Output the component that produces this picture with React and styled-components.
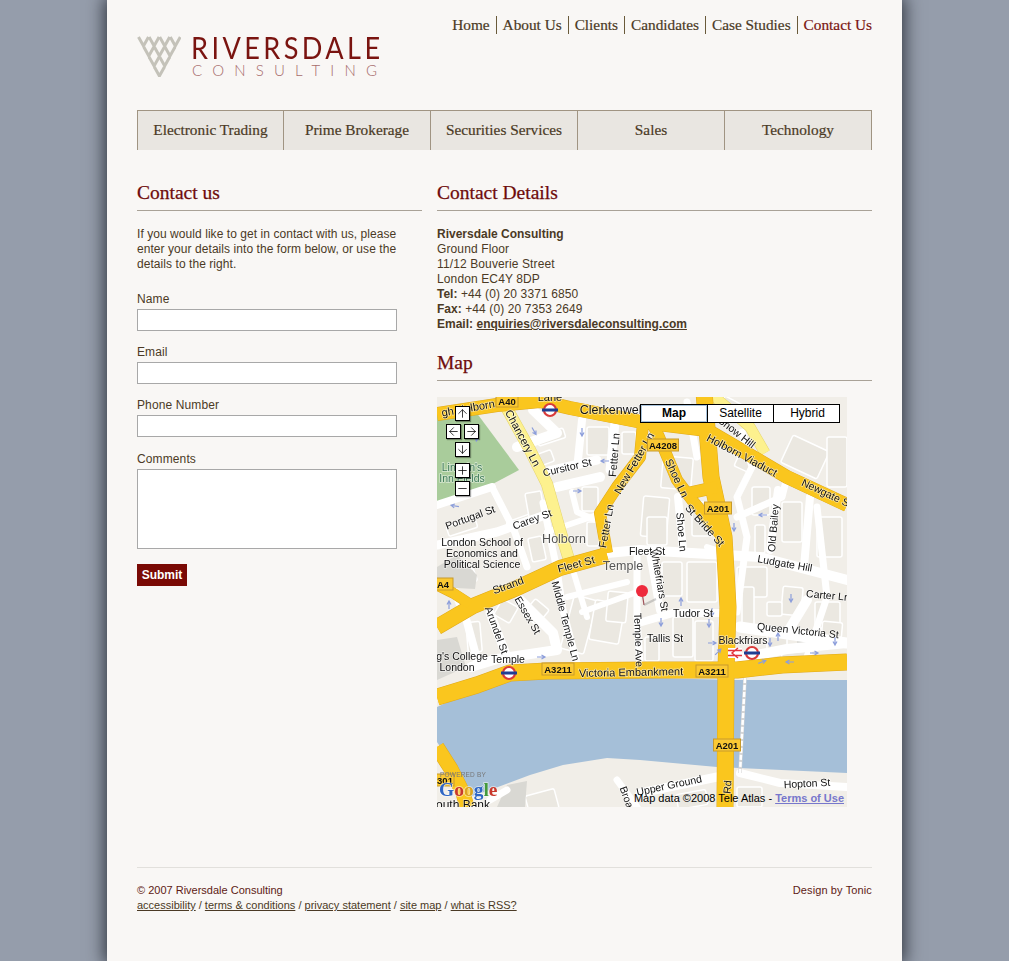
import React from "react";
import styled, { createGlobalStyle } from "styled-components";
import { ArrowUp, ArrowDown, ArrowLeft, ArrowRight, Plus, Minus } from "lucide-react";

const Global = createGlobalStyle`
  html, body { margin: 0; padding: 0; background: #959dab; overflow: hidden; }
  body { font-family: "Liberation Sans", Arial, sans-serif; font-size: 12px; line-height: 15px; letter-spacing: 0.12px; color: #4b3a25; }
  strong { letter-spacing: 0; }
`;
const Panel = styled.div`
  width: 735px; min-height: 961px; margin: 0 auto; padding: 0 30px; background: #f9f7f5;
  box-shadow: 0 0 16px 3px rgba(20, 24, 32, 0.75);
`;
const Header = styled.header`display: flex; justify-content: space-between; height: 110px;`;
const Logo = styled.div`display: flex; gap: 10px; padding-top: 36px; height: 41px;`;
const LogoWords = styled.div`display: flex; flex-direction: column; letter-spacing: 0;`;
const LogoMain = styled.div`
  font-family: Lato, sans-serif; font-weight: 400; font-size: 31px; line-height: 23px; letter-spacing: 3.9px; color: #7a1410; white-space: nowrap;
  transform: scaleX(0.875); transform-origin: left center;
`;
const LogoSub = styled.div`
  font-family: Lato, sans-serif; font-weight: 300; font-size: 15px; line-height: 11px; margin-top: 6px; letter-spacing: 10.2px; color: #a76c6c; white-space: nowrap; margin-left: 1px;
`;
const TopNav = styled.nav`display: flex; align-items: center; height: 18px; margin-top: 16px; letter-spacing: 0;`;
const TopLink = styled.a`
  font-family: "Liberation Serif", serif; font-size: 15.3px; line-height: 18px; padding: 0 6px; color: ${p => p.$active ? "#7a1410" : "#4b3a25"};
  border-right: 1px solid #6a5a3a; white-space: nowrap; -webkit-text-stroke: 0.2px currentColor;
  &:last-child { border-right: 0; padding-right: 0; }
`;
const Tabs = styled.nav`
  display: grid; grid-template-columns: 146px 147px 147px 147px 148px; height: 39px; border-top: 1px solid #a09482; background: #e9e6e1; letter-spacing: 0;
`;
const Tab = styled.a`
  display: flex; align-items: center; justify-content: center; padding-bottom: 2px; font-family: "Liberation Serif", serif; font-size: 15.3px; color: #4b3a25;
  border-left: 1px solid #a09482; white-space: nowrap; -webkit-text-stroke: 0.2px currentColor;
  &:last-child { border-right: 1px solid #a09482; }
`;
const Main = styled.main`display: grid; grid-template-columns: 285px 435px; column-gap: 15px; padding-top: 30px;`;
const Heading = styled.h2`
  margin: 0; height: 30px; font-family: "Liberation Serif", serif; font-weight: 400; font-size: 19.5px; line-height: 26px; letter-spacing: 0; color: #6e0b0b;
  border-bottom: 1px solid #a9a297; -webkit-text-stroke: 0.25px currentColor;
`;
const Intro = styled.p`margin: 16px 0 19px; width: 265px; letter-spacing: 0.06px;`;
const Field = styled.div`display: flex; flex-direction: column; margin-bottom: ${p => p.$mb || 13}px;`;
const Label = styled.label`height: 15px; line-height: 17px; margin-bottom: 3px;`;
const TextInput = styled.input`
  box-sizing: border-box; width: 260px; height: 22px; padding: 2px; margin: 0; border: 1px solid #a8a8a8; background: #fff;
`;
const TextArea = styled.textarea`
  box-sizing: border-box; width: 260px; height: 80px; padding: 2px; margin: 0; border: 1px solid #a8a8a8; background: #fff; resize: none; display: block;
`;
const Submit = styled.button`
  display: block; width: 50px; height: 22px; padding: 0; border: 0; background: #7a0a05; color: #fff; font: bold 12px "Liberation Sans", sans-serif;
`;
const Details = styled.address`font-style: normal; margin: 16px 0 18px;`;
const Line = styled.div``;
const Mail = styled.a`font-weight: bold; letter-spacing: 0; text-decoration: underline; color: #4b3a25;`;
const MapFrame = styled.div`position: relative; width: 410px; height: 410px; margin-top: 16px; overflow: hidden; background: #f1eee8; letter-spacing: 0;`;
const MapSvg = styled.svg`
  display: block; filter: blur(0.35px);
  text { font-family: "Liberation Sans", sans-serif; fill: #111; paint-order: stroke; stroke: rgba(255,255,255,.55); stroke-width: 1.5px; }
`;
const NavBtn = styled.div`
  position: absolute; left: ${p => p.$x}px; top: ${p => p.$y}px; box-sizing: border-box; width: 15px; height: 15px; background: #fff; border: 1px solid #000;
  box-shadow: 1px 1px 1px rgba(0,0,0,.35); display: flex; align-items: center; justify-content: center; color: #000;
`;
const TypeBar = styled.div`
  position: absolute; left: 203px; top: 7px; width: 200px; height: 19px; box-sizing: border-box; display: grid; grid-template-columns: 67px 66px 67px; background: #fff; border: 1px solid #000;
`;
const TypeBtn = styled.div`
  display: flex; align-items: center; justify-content: center; font-size: 12px; color: #000; font-weight: ${p => p.$on ? "bold" : "normal"};
  border-right: 1px solid #000; box-shadow: ${p => p.$on ? "inset 0 0 0 1px #a9c4dc" : "none"};
  &:last-child { border-right: 0; }
`;
const MapCredit = styled.div`
  position: absolute; right: 3px; bottom: 2px; font-size: 11px; line-height: 13px; color: #000; white-space: nowrap;
`;
const Terms = styled.span`font-weight: bold; color: #7777cc; text-decoration: underline;`;
const Footer = styled.footer`
  display: flex; justify-content: space-between; margin-top: 60px; padding-top: 15px; border-top: 1px solid #e2e0dc; font-size: 11px; letter-spacing: 0; color: #5e1a14;
`;
const Credit = styled.div`letter-spacing: 0.12px;`;
const FootLinks = styled.div`color: #4b3a25;`;
const FootLink = styled.a`text-decoration: underline; color: #4b3a25;`;

const Chevrons = () => {
  const rows = [[0,4],[1,3],[2,2],[3,1]];
  const vs = [];
  rows.forEach(([r, n]) => {
    for (let i = 0; i < n; i++) {
      const x = 1.5 + r * 5.3 + i * 10.6;
      const y = 1 + r * 10;
      vs.push(<path key={r + "-" + i} d={`M${x} ${y}L${x + 5} ${y + 9}L${x + 10} ${y}`} fill="none" stroke="#c4c2b9" strokeWidth="3" />);
    }
  });
  return <svg width="44" height="41" viewBox="0 0 44 41">{vs}</svg>;
};

const poly = pts => pts.map(p => p.join(",")).join(" ");

const yellow = [
  [[[0,300],[40,288],[73,276],[110,274],[213,273],[300,273],[345,268],[410,265]], 16],
  [[[0,230],[36,209],[80,191],[123,171],[170,158]], 15],
  [[[0,188],[16,196],[33,207]], 10],
  [[[0,17],[60,8],[103,4],[133,11],[205,25],[270,33],[350,80],[410,108]], 13],
  [[[267,-5],[274,80],[287,140],[291,210],[289,272],[288,410]], 16],
  [[[213,22],[222,40],[240,83],[255,103],[283,137]], 11],
  [[[248,97],[280,90]], 12],
  [[[206,26],[203,60],[180,90],[163,116],[170,156]], 11],
  [[[0,350],[14,372],[26,396],[30,410]], 14],
];
const paleYellow = [
  [[[68,8],[93,53],[110,87],[123,133],[133,166]], 11],
  [[[273,-4],[313,30],[328,56]], 10],
];
const white = [
  [[[0,108],[55,90]],8],[[[0,148],[60,135],[117,115]],9],[[[55,90],[77,133],[90,170]],7],
  [[[103,76],[160,63]],9],[[[120,90],[163,80]],10],[[[178,26],[173,73]],9],[[[145,23],[141,63]],8],
  [[[96,13],[120,36],[80,50]],10],[[[106,106],[120,173],[126,213],[140,266]],7],
  [[[213,156],[223,213]],8],[[[241,100],[246,153]],8],[[[341,93],[333,153]],8],[[[373,100],[367,170]],8],
  [[[170,156],[203,153],[323,160],[410,183]],10],[[[200,160],[200,220],[203,266]],7],
  [[[205,225],[236,216],[283,216]],8],[[[303,230],[410,246]],11],[[[300,262],[350,252],[410,246]],10],
  [[[350,236],[370,203]],10],[[[53,216],[70,260]],9],[[[83,203],[116,236],[120,253],[60,262],[34,270]],10],
  [[[303,376],[343,386],[410,390]],8],[[[203,396],[280,380]],9],[[[180,383],[200,410]],7],[[[53,403],[70,393]],7],
  [[[20,200],[30,225],[40,262]],8],[[[135,170],[150,220]],6],[[[270,150],[285,155]],6],[[[305,35],[315,70],[300,100],[310,140],[300,215]],7],
  [[[350,80],[345,100],[300,120]],7],[[[380,110],[390,200],[370,260]],7],[[[160,118],[110,135]],6],[[[260,60],[250,5]],7],
  [[[130,200],[190,185]],6],[[[145,215],[200,195]],6],[[[300,330],[296,345]],3],[[[170,128],[140,115],[135,95]],6],
];
const blocks = [
  [150,30,22,28,0],[185,35,14,22,0],[100,55,16,12,-20],[70,120,30,10,-20],[90,95,16,26,-10],[10,125,30,10,-18],[15,175,24,13,-20],
  [93,140,14,24,-12],[145,90,16,24,0],[150,125,12,24,0],[225,60,30,32,5],[205,100,26,40,5],[210,120,20,28,0],[255,105,18,34,0],
  [300,55,16,18,25],[315,90,18,28,0],[318,128,10,28,0],[345,105,20,40,0],[380,120,25,40,0],[348,45,40,30,25],[390,40,20,50,0],
  [283,5,30,14,28],[250,165,30,40,0],[225,165,20,34,0],[300,170,30,30,0],[345,190,20,28,5],[378,205,25,26,0],[330,205,15,14,0],
  [236,220,20,40,0],[258,224,18,40,0],[208,240,14,24,0],[90,205,18,20,40],[60,205,18,18,30],[130,200,24,55,15],[155,205,30,40,10],
  [30,225,14,30,-5],[305,190,12,40,0],[345,255,30,12,-5],[0,185,18,4,0],[330,235,20,18,0],[385,225,20,15,5],[300,390,25,20,0],[240,395,30,15,-10],
  [90,395,30,20,-15],[100,35,28,10,-18],[170,195,20,30,5],
];
const grey = [[[0,243],[20,240],[29,270],[0,283]],[[360,240],[383,242],[383,254],[360,252]],[[70,388],[90,384],[88,410],[60,410]],[[20,158],[40,178],[38,192],[0,190],[0,170]]];
const labels = [
  ["gh Holborn",31,11,-10,11],["Lane",113,0,0,11],["Chancery Ln",86,41,62,11],["Cursitor St",130,70,-13,10.5],["Fetter Ln",177,58,-85,11],
  ["New Fetter Ln",197,66,-60,11],["Fetter Ln",169,129,-80,11],["Portugal St",33,120,-20,10.5],["Carey St",95,122,-20,10.5],
  ["London School of",45,145,0,10.5],["Economics and",45,156,0,10.5],["Political Science",45,167,0,10.5],["Fleet St",139,167,-15,11],
  ["Strand",71,188,-20,11],["Essex St",91,218,60,10.5],["Middle Temple Ln",129,224,75,10.5],["Arundel St",60,233,70,10.5],
  ["Snow Hill",300,35,38,10.5],["Holborn Viaduct",305,58,28,11],["Newgate St",390,96,25,10.5],["Shoe Ln",240,81,65,11],["Shoe Ln",245,135,85,10.5],
  ["St Bride St",268,128,48,11],["Old Bailey",336,131,-85,10.5],["Fleet St",210,154,0,10.5],["Whitefriars St",223,183,80,10.5],["Ludgate Hill",348,166,10,10.5],
  ["Carter Ln",391,198,5,10.5],["Tudor St",256,216,0,10.5],["Tallis St",228,241,0,10.5],["Temple Ave",202,243,88,10.5],["Queen Victoria St",361,233,6,10.5],
  ["Blackfriars",306,243,0,10.5],["Temple",71,262,0,10.5],["g's College",25,259,0,10.5],["London",20,270,0,10.5],["Victoria Embankment",194,275,-1,11],
  ["Upper Ground",232,388,-12,10.5],["Hopton St",370,386,-3,10.5],["Broa",190,400,70,10.5],["Rd",290,390,-85,10.5],["Clerkenwell",175,13,0,12.5],["outh Bank",26,408,0,12],
];
const shields = [["A40",70,4,22],["A4208",226,48,31],["A201",281,111,27],["A4",6,187,20],["A3211",121,272,32],["A3211",275,274,32],["A201",290,348,27],["301",8,383,18]];
const arrows = [[97,34,60],[145,35,90],[168,64,180],[140,94,0],[40,40,100],[18,109,190],[12,208,-90],[326,118,180],[297,130,90],[354,201,90],[275,246,0],[272,226,90],[341,240,-90],[333,245,90],[398,244,90],[377,256,0],[353,265,180],[281,255,-45],[325,265,-20],[104,260,0],[275,215,90],[244,205,-90],[224,225,90]];

const Roundel = ({ x, y }) => (
  <g>
    <circle cx={x} cy={y} r="6" fill="#fff" stroke="#d93a3a" strokeWidth="2.2" />
    <rect x={x - 8} y={y - 1.5} width="16" height="3" fill="#1f3f93" />
  </g>
);

const Streets = () => (
  <MapSvg width="410" height="410" viewBox="0 0 410 410">
    <rect width="410" height="410" fill="#f1eee8" />
    <polygon points={poly([[0,17],[36,11],[82,73],[50,90],[0,107]])} fill="#a9cc9b" />
    {blocks.map(([x,y,w,h,r],i) => (
      <rect key={i} x={x} y={y} width={w} height={h} rx="2" transform={`rotate(${r} ${x+w/2} ${y+h/2})`} fill="#ebe8e1" stroke="#fff" strokeWidth="1.5" />
    ))}
    {grey.map((g,i) => <polygon key={i} points={poly(g)} fill="#d9d8d3" />)}
    {white.map(([pts,w],i) => <polyline key={i} points={poly(pts)} fill="none" stroke="#fff" strokeWidth={w} strokeLinecap="round" strokeLinejoin="round" />)}
    <polygon points={poly([[0,310],[26,298],[73,283],[106,281],[213,281],[300,283],[410,283],[410,376],[280,370],[203,363],[170,361],[126,368],[93,378],[53,393],[32,400],[10,360],[0,345]])} fill="#a5bfd8" />
    <polyline points="308,281 303,376" stroke="#d5d5d5" strokeWidth="3.5" fill="none" />
    <polyline points="308,281 303,376" stroke="#fff" strokeWidth="2.5" strokeDasharray="5 2" fill="none" />
    {paleYellow.map(([pts,w],i) => (
      <g key={i}>
        <polyline points={poly(pts)} fill="none" stroke="#e5d56f" strokeWidth={w+1} strokeLinejoin="round" />
        <polyline points={poly(pts)} fill="none" stroke="#fdf18e" strokeWidth={w} strokeLinejoin="round" />
      </g>
    ))}
    {yellow.map(([pts,w],i) => <polyline key={"o"+i} points={poly(pts)} fill="none" stroke="#dfa91c" strokeWidth={w+1} strokeLinejoin="round" />)}
    {yellow.map(([pts,w],i) => <polyline key={"y"+i} points={poly(pts)} fill="none" stroke="#fac61e" strokeWidth={w} strokeLinejoin="round" />)}
    {arrows.map(([x,y,r],i) => (
      <path key={i} d="M-4 0H3M0.5 -2L4 0L0.5 2" transform={`translate(${x} ${y}) rotate(${r})`} fill="none" stroke="#8c9edb" strokeWidth="1.2" />
    ))}
    {labels.map(([t,x,y,r,s],i) => (
      <text key={i} x={x} y={y} fontSize={s} textAnchor="middle" dominantBaseline="central" transform={`rotate(${r} ${x} ${y})`}>{t}</text>
    ))}
    <text x="127" y="142" fontSize="12.5" textAnchor="middle" dominantBaseline="central" style={{ fill: "#555" }}>Holborn</text>
    <text x="186" y="169" fontSize="12.5" textAnchor="middle" dominantBaseline="central" style={{ fill: "#555" }}>Temple</text>
    <text x="25" y="70" fontSize="10.5" textAnchor="middle" dominantBaseline="central" style={{ fill: "#3c7a56" }}>Lincoln's</text>
    <text x="25" y="81" fontSize="10.5" textAnchor="middle" dominantBaseline="central" style={{ fill: "#3c7a56" }}>Inn Fields</text>
    {shields.map(([t,x,y,w],i) => (
      <g key={i}>
        <rect x={x-w/2} y={y-6} width={w} height="12" fill="#fbc933" stroke="#c79a2c" />
        <text x={x} y={y} fontSize="9.5" fontWeight="bold" textAnchor="middle" dominantBaseline="central" style={{ stroke: "none" }}>{t}</text>
      </g>
    ))}
    <Roundel x={113} y={13} />
    <Roundel x={72} y={276} />
    <Roundel x={315} y={256} />
    <g>
      <rect x="291" y="251" width="14" height="10" fill="#fff" />
      <path d="M291 253.5H305M291 258.5H305M301 251L295 256L301 261" fill="none" stroke="#e3343c" strokeWidth="1.4" />
    </g>
    <path d="M205 195L207 208" stroke="#a05058" strokeWidth="1.2" />
    <path d="M207 208L219 202" stroke="rgba(120,120,120,.35)" strokeWidth="2" />
    <circle cx="205" cy="194" r="6" fill="#ee2a3c" />
    <text x="3" y="380" fontSize="6.5" style={{ fill: "#777", stroke: "none", letterSpacing: "0.2px" }}>POWERED BY</text>
    <text x="2" y="399" fontSize="19.5" fontWeight="bold" style={{ fontFamily: "Liberation Serif, serif", stroke: "rgba(255,255,255,.6)" }}>
      <tspan style={{ fill: "#2f66c4" }}>G</tspan><tspan style={{ fill: "#c9382c" }}>o</tspan><tspan style={{ fill: "#dca520" }}>o</tspan><tspan style={{ fill: "#2f66c4" }}>g</tspan><tspan style={{ fill: "#43993e" }}>l</tspan><tspan style={{ fill: "#c9382c" }}>e</tspan>
    </text>
  </MapSvg>
);

const navButtons = [
  [ArrowUp, 18, 9], [ArrowLeft, 9, 27], [ArrowRight, 27, 27], [ArrowDown, 18, 45], [Plus, 18, 66], [Minus, 18, 84],
];

export default function App() {
  return (
    <>
      <Global />
      <Panel>
        <Header>
          <Logo>
            <Chevrons />
            <LogoWords>
              <LogoMain>RIVERSDALE</LogoMain>
              <LogoSub>CONSULTING</LogoSub>
            </LogoWords>
          </Logo>
          <TopNav>
            {["Home", "About Us", "Clients", "Candidates", "Case Studies"].map(t => <TopLink key={t}>{t}</TopLink>)}
            <TopLink $active>Contact Us</TopLink>
          </TopNav>
        </Header>
        <Tabs>
          {["Electronic Trading", "Prime Brokerage", "Securities Services", "Sales", "Technology"].map(t => <Tab key={t}>{t}</Tab>)}
        </Tabs>
        <Main>
          <section>
            <Heading>Contact us</Heading>
            <Intro>If you would like to get in contact with us, please enter your details into the form below, or use the details to the right.</Intro>
            <Field><Label>Name</Label><TextInput /></Field>
            <Field><Label>Email</Label><TextInput /></Field>
            <Field $mb={14}><Label>Phone Number</Label><TextInput /></Field>
            <Field $mb={15}><Label>Comments</Label><TextArea /></Field>
            <Submit>Submit</Submit>
          </section>
          <section>
            <Heading>Contact Details</Heading>
            <Details>
              <Line><strong>Riversdale Consulting</strong></Line>
              <Line>Ground Floor</Line>
              <Line>11/12 Bouverie Street</Line>
              <Line>London EC4Y 8DP</Line>
              <Line><strong>Tel:</strong> +44 (0) 20 3371 6850</Line>
              <Line><strong>Fax:</strong> +44 (0) 20 7353 2649</Line>
              <Line><strong>Email:</strong> <Mail>enquiries@riversdaleconsulting.com</Mail></Line>
            </Details>
            <Heading>Map</Heading>
            <MapFrame>
              <Streets />
              {navButtons.map(([Icon, x, y], i) => (
                <NavBtn key={i} $x={x} $y={y}><Icon size={13} strokeWidth={1.4} /></NavBtn>
              ))}
              <TypeBar>
                <TypeBtn $on>Map</TypeBtn>
                <TypeBtn>Satellite</TypeBtn>
                <TypeBtn>Hybrid</TypeBtn>
              </TypeBar>
              <MapCredit>Map data ©2008 Tele Atlas - <Terms>Terms of Use</Terms></MapCredit>
            </MapFrame>
          </section>
        </Main>
        <Footer>
          <div>
            <div>© 2007 Riversdale Consulting</div>
            <FootLinks>
              <FootLink>accessibility</FootLink> / <FootLink>terms &amp; conditions</FootLink> / <FootLink>privacy statement</FootLink> / <FootLink>site map</FootLink> / <FootLink>what is RSS?</FootLink>
            </FootLinks>
          </div>
          <Credit>Design by Tonic</Credit>
        </Footer>
      </Panel>
    </>
  );
}
